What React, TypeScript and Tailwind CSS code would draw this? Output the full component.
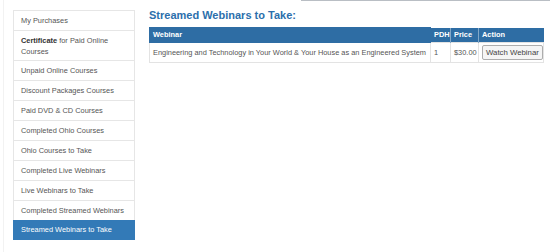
import React from 'react'

const menu: { label: React.ReactNode; active?: boolean; tall?: boolean }[] = [
  { label: 'My Purchases' },
  {
    label: (
      <>
        <span className="font-bold text-[#333]">Certificate</span> for Paid Online Courses
      </>
    ),
    tall: true
  },
  { label: 'Unpaid Online Courses' },
  { label: 'Discount Packages Courses' },
  { label: 'Paid DVD & CD Courses' },
  { label: 'Completed Ohio Courses' },
  { label: 'Ohio Courses to Take' },
  { label: 'Completed Live Webinars' },
  { label: 'Live Webinars to Take' },
  { label: 'Completed Streamed Webinars' },
  { label: 'Streamed Webinars to Take', active: true }
]

export default function App() {
  return (
    <div className="w-[550px] h-[252px] bg-white font-['Liberation_Sans',Arial,sans-serif] text-[7.4px] text-[#555] overflow-hidden">
      <div className="ml-[3px] h-full border-l border-[#f2f2f2] flex">
        {/* Sidebar */}
        <div className="pl-[9px] pt-[10px] w-[132px] shrink-0">
          <ul className="w-[122px]">
            {menu.map((item, i) => (
              <li
                key={i}
                className={
                  item.active
                    ? 'px-[7px] h-[20px] flex items-center bg-[#337ab7] text-white border border-[#337ab7] -mt-px whitespace-nowrap'
                    : `px-[7px] flex items-center border border-[#e6e6e6] bg-white ${i === 0 ? '' : '-mt-px'} ${
                        item.tall ? 'h-[31px] leading-[11.5px] pt-px pr-[20px]' : 'h-[21px] whitespace-nowrap'
                      }`
                }
              >
                <span>{item.label}</span>
              </li>
            ))}
          </ul>
        </div>

        {/* Content */}
        <div className="flex-1 relative pl-[13px] pt-[8px] pr-[8px]">
          <div className="absolute top-0 left-[165px] right-[2px] h-px bg-[#b9bec4]" />
          <h2 className="text-[11px] font-bold text-[#2c6fac] leading-[15px]">Streamed Webinars to Take:</h2>
          <table className="mt-[4px] w-[394px] border-collapse table-fixed">
            <thead>
              <tr className="bg-[#2e6da4] text-white h-[15px]">
                <th className="text-left px-[3px] border border-[#2e6da4] font-bold w-[281px]">Webinar</th>
                <th className="text-left px-[3px] border-l border-white/40 font-bold w-[20px]">PDH</th>
                <th className="text-left px-[3px] border-l border-white/40 font-bold w-[28px]">Price</th>
                <th className="text-left px-[3px] border-l border-white/40 font-bold w-[65px]">Action</th>
              </tr>
            </thead>
            <tbody>
              <tr className="h-[20px] border border-[#e3e3e3]">
                <td className="px-[3px] whitespace-nowrap overflow-hidden">
                  Engineering and Technology in Your World &amp; Your House as an Engineered System
                </td>
                <td className="px-[3px] border-l border-[#e3e3e3]">1</td>
                <td className="px-[3px] border-l border-[#e3e3e3] whitespace-nowrap">$30.00</td>
                <td className="px-[3px] border-l border-[#e3e3e3]">
                  <button className="border border-[#adadad] rounded-[2px] bg-[#f5f5f5] px-[3px] h-[15px] leading-[13px] text-[7.8px] text-[#444] whitespace-nowrap">
                    Watch Webinar
                  </button>
                </td>
              </tr>
            </tbody>
          </table>
        </div>
      </div>
    </div>
  )
}
